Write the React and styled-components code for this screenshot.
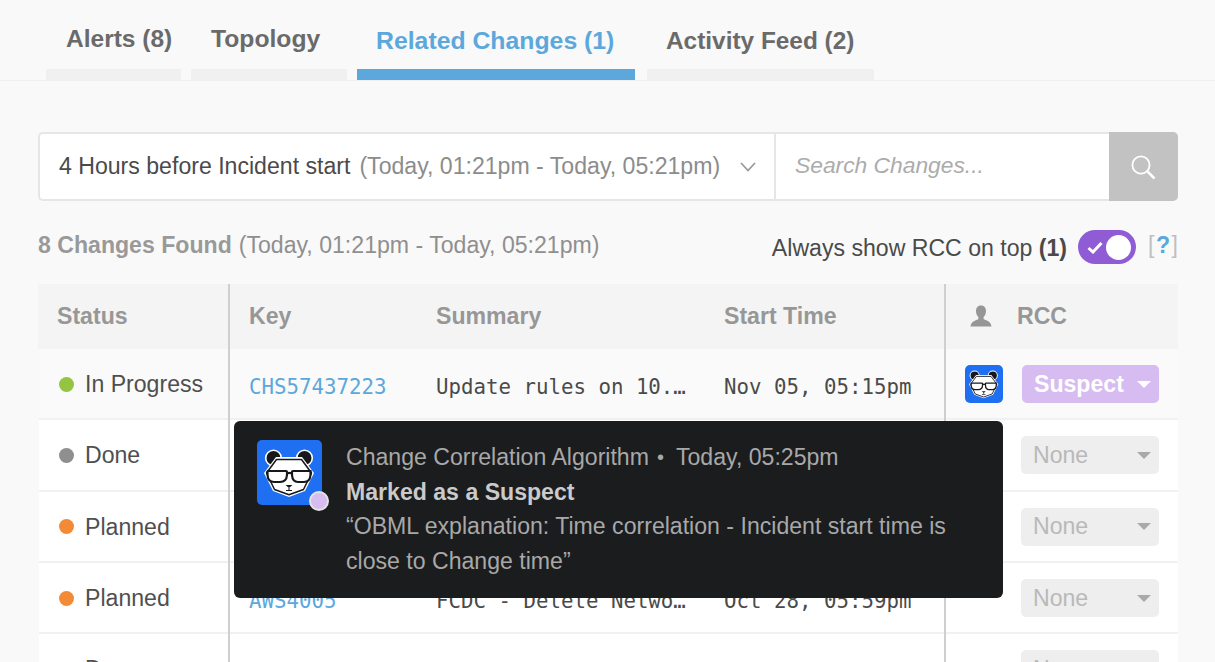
import React from "react";
import styled, { createGlobalStyle } from "styled-components";

const Global = createGlobalStyle`
  html, body { margin: 0; padding: 0; height: 662px; overflow: hidden; background: #f9f9f9; }
  body { font-family: "Liberation Sans", Arial, sans-serif; color: #4a4a4a; }
  * { box-sizing: border-box; }
`;

const Page = styled.div`
  width: 1215px;
  height: 662px;
  overflow: hidden;
  background: #f9f9f9;
`;

const TabBar = styled.nav`
  display: flex;
  height: 81px;
  padding-left: 46px;
  border-bottom: 1px solid #efefef;
`;

const Tab = styled.div`
  width: ${(p) => p.$width}px;
  margin-right: ${(p) => p.$gap}px;
  height: 80px;
  display: flex;
  flex-direction: column;
  justify-content: space-between;
`;

const TabLabel = styled.div`
  padding: ${(p) => p.$top}px 0 0 ${(p) => p.$left}px;
  font-size: ${(p) => p.$size}px;
  line-height: 28px;
  font-weight: 700;
  white-space: nowrap;
  color: ${(p) => (p.$active ? "#5ca8dc" : "#6a6a6a")};
`;

const TabBarMark = styled.div`
  height: 11px;
  background: ${(p) => (p.$active ? "#5ca8dc" : "#f0f0f0")};
`;

const Main = styled.main`
  padding: 51px 37px 0 38px;
`;

const FilterBar = styled.div`
  display: flex;
  height: 69px;
  background: #fff;
  border: 2px solid #e6e6e6;
  border-right: 0;
  border-radius: 5px;
`;

const RangeSelect = styled.div`
  width: 736px;
  display: flex;
  align-items: center;
  padding: 0 18px 0 19px;
  border-right: 2px solid #e6e6e6;
  font-size: 23.1px;
  white-space: nowrap;
`;

const RangeMuted = styled.span`
  margin-left: 9px;
  color: #8c8c8c;
`;

const Chevron = styled.svg`
  margin-left: auto;
  width: 16px;
  height: 10px;
  fill: none;
  stroke: #9a9a9a;
  stroke-width: 1.8;
`;

const SearchInput = styled.div`
  flex: 1;
  padding: 0 0 3px 19px;
  display: flex;
  align-items: center;
  font-size: 22.8px;
  font-style: italic;
  color: #acacac;
`;

const SearchButton = styled.div`
  width: 69px;
  margin: -2px 0;
  padding-right: 2px;
  background: #c2c2c2;
  border-radius: 0 5px 5px 0;
  display: flex;
  align-items: center;
  justify-content: center;
`;

const SummaryRow = styled.div`
  height: 83px;
  padding-top: 30px;
  display: flex;
  justify-content: space-between;
  font-size: 23.1px;
`;

const Found = styled.div`
  color: #8f8f8f;
  line-height: 28px;
  white-space: nowrap;
`;

const FoundBold = styled.b`
  font-weight: 700;
  color: #999;
  margin-right: 7px;
`;

const AlwaysShow = styled.div`
  display: flex;
  align-items: flex-start;
  line-height: 28px;
  padding-top: 3px;
  white-space: nowrap;
  color: #4a4a4a;
`;

const Toggle = styled.div`
  width: 58px;
  height: 34px;
  margin: -4px 0 0 11px;
  padding: 3px 5px 3px 9px;
  border-radius: 17px;
  background: #8f5cd6;
  display: flex;
  align-items: center;
  justify-content: space-between;
`;

const ToggleKnob = styled.div`
  width: 25px;
  height: 25px;
  border-radius: 50%;
  background: #fff;
`;

const Help = styled.div`
  margin-left: 12px;
  margin-top: -3px;
  color: #c0c0c0;
`;

const HelpMark = styled.b`
  color: #5ca8dc;
  margin: 0 1.5px;
`;

const TableWrap = styled.div`
  position: relative;
  width: 1140px;
`;

const HeadRow = styled.div`
  display: grid;
  grid-template-columns: 192px 186px 288px 240px 234px;
  height: 65px;
  background: #f4f4f4;
`;

const BodyRow = styled.div`
  display: grid;
  grid-template-columns: 191px 186px 288px 240px 234px;
  height: 71.33px;
  margin-left: 1px;
  background: linear-gradient(#f1f1f1, #f1f1f1) bottom / 100% 2px no-repeat,
    ${(p) => (p.$tint ? "#fafafa" : "#fff")};
`;

const Cell = styled.div`
  display: flex;
  align-items: center;
  min-width: 0;
  padding: ${(p) => (p.$body ? "1px" : "0")} 0 ${(p) => (p.$body ? "2px" : "0")} ${(p) => p.$pad ?? 20}px;
  white-space: nowrap;
  ${(p) => p.$divider && "border-right: 2px solid #cfcfcf;"}
  ${(p) => p.$dividerLeft && "border-left: 2px solid #cfcfcf;"}
`;

const HeadLabel = styled.span`
  font-size: 23.1px;
  font-weight: 700;
  color: #979797;
`;

const Dot = styled.span`
  width: 15px;
  height: 15px;
  border-radius: 50%;
  margin-right: 11px;
  background: ${(p) => p.$color};
`;

const StatusText = styled.span`
  font-size: 23.1px;
  padding-top: 1px;
  color: #4f4f4f;
`;

const KeyLink = styled.span`
  font-family: "DejaVu Sans Mono", monospace;
  font-size: 20.75px;
  padding-top: 6px;
  color: #5ca8dc;
`;

const Mono = styled.span`
  font-family: "DejaVu Sans Mono", monospace;
  font-size: 20.75px;
  padding-top: 6px;
  color: #4a4a4a;
`;

const Avatar = styled.div`
  width: ${(p) => p.$size}px;
  height: ${(p) => p.$size}px;
  border-radius: ${(p) => p.$radius}px;
  background: #1f6ff2;
  flex: none;
  line-height: 0;
`;

const RccPill = styled.div`
  width: ${(p) => (p.$suspect ? 137 : 138)}px;
  height: 38px;
  margin-left: ${(p) => p.$left}px;
  border-radius: 5px;
  padding: 0 8px 0 12px;
  display: flex;
  align-items: center;
  justify-content: space-between;
  font-size: 23.1px;
  font-weight: ${(p) => (p.$suspect ? 700 : 400)};
  color: ${(p) => (p.$suspect ? "#fff" : "#b9b9b9")};
  background: ${(p) => (p.$suspect ? "#d6bcf0" : "#eeeeee")};
`;

const Caret = styled.i`
  width: 0;
  height: 0;
  border-left: 7px solid transparent;
  border-right: 7px solid transparent;
  border-top: 7px solid ${(p) => (p.$suspect ? "#fff" : "#a9a9a9")};
`;

const PersonIcon = styled.svg`
  width: 22px;
  height: 22px;
  margin: 0 25px 2px 4px;
  fill: #969696;
`;

const Tooltip = styled.div`
  position: absolute;
  left: 196px;
  top: 137px;
  width: 769px;
  height: 177px;
  padding: 19px 24px 0 23px;
  border-radius: 6px;
  background: #1b1c1e;
  display: flex;
  align-items: flex-start;
`;

const TipAvatarWrap = styled.div`
  position: relative;
  margin-right: 24px;
  flex: none;
`;

const TipBadge = styled.span`
  position: absolute;
  right: -7px;
  bottom: -6px;
  width: 20px;
  height: 20px;
  border-radius: 50%;
  background: #d6bcf0;
  border: 2px solid #e4e4e4;
`;

const TipBody = styled.div`
  font-size: 23.1px;
  line-height: 34.7px;
  color: #a8a8a8;
`;

const TipMeta = styled.div`
  display: flex;
  align-items: center;
  height: 34.7px;
  white-space: nowrap;
`;

const TipSeparator = styled.span`
  margin: 0 12px 0 8px;
  font-size: 20px;
  line-height: 20px;
`;

const TipTitle = styled.div`
  font-weight: 700;
  color: #cacaca;
`;

const Panda = () => (
  <svg viewBox="0 0 65 65" width="100%" height="100%">
    <circle cx="16.5" cy="18" r="8.6" fill="#fff" />
    <circle cx="47.5" cy="18" r="8.6" fill="#fff" />
    <circle cx="16.5" cy="18" r="7" fill="#16181c" />
    <circle cx="47.5" cy="18" r="7" fill="#16181c" />
    <path d="M19 17 L45 17 L57 33 L48 51 L32 57 L16 51 L7 33 Z" fill="#fff" strokeLinejoin="round" />
    <path d="M19.5 19.5 L44.5 19.5 L54.5 33 L46.5 49.5 L32 54.8 L17.5 49.5 L9.5 33 Z" fill="#fff" stroke="#16181c" strokeWidth="1.5" strokeLinejoin="round" />
    <path d="M11 31 H29 Q30 31 30 32 V35 Q29.5 42 23 42 H17 Q11 42 10.5 35 V31.5 Z" fill="#fff" stroke="#16181c" strokeWidth="2.2" />
    <path d="M35 32 Q35 31 36 31 H53.5 V35 Q53 42 47 42 H41 Q35.5 42 35 35 Z" fill="#fff" stroke="#16181c" strokeWidth="2.2" />
    <path d="M30 33 H35" stroke="#16181c" strokeWidth="2.2" />
    <path d="M28.5 45 H35.5 L32 48 Z" fill="#16181c" />
    <path d="M32 48 V50 M29 50.5 H35" stroke="#16181c" strokeWidth="1.1" fill="none" />
  </svg>
);

const tabs = [
  { label: "Alerts (8)", width: 135, gap: 10, top: 25, left: 20, size: 24.5 },
  { label: "Topology", width: 156, gap: 10, top: 25, left: 20, size: 24.7 },
  { label: "Related Changes (1)", width: 278, gap: 12, top: 27, left: 19, size: 24.8, active: true },
  { label: "Activity Feed (2)", width: 227, gap: 0, top: 27, left: 19, size: 24.4 },
];

const rows = [
  { status: "In Progress", color: "#95c442", key: "CHS57437223", summary: "Update rules on 10.…", time: "Nov 05, 05:15pm", suspect: true },
  { status: "Done", color: "#8f8f8f", key: "AWS4012", summary: "FCDC - Update Route…", time: "Nov 02, 03:20pm" },
  { status: "Planned", color: "#f38a35", key: "AWS4008", summary: "FCDC - Add Network…", time: "Oct 30, 11:42am" },
  { status: "Planned", color: "#f38a35", key: "AWS4005", summary: "FCDC - Delete Netwo…", time: "Oct 28, 05:59pm" },
  { status: "Done", color: "#8f8f8f", key: "AWS4001", summary: "FCDC - Create Netwo…", time: "Oct 26, 02:10pm" },
];

export default function App() {
  return (
    <Page>
      <Global />
      <TabBar>
        {tabs.map((t) => (
          <Tab key={t.label} $width={t.width} $gap={t.gap}>
            <TabLabel $active={t.active} $top={t.top} $left={t.left} $size={t.size}>{t.label}</TabLabel>
            <TabBarMark $active={t.active} />
          </Tab>
        ))}
      </TabBar>
      <Main>
        <FilterBar>
          <RangeSelect>
            4 Hours before Incident start
            <RangeMuted>(Today, 01:21pm - Today, 05:21pm)</RangeMuted>
            <Chevron viewBox="0 0 16 10"><path d="M1 1 L8 8.5 L15 1" /></Chevron>
          </RangeSelect>
          <SearchInput>Search Changes...</SearchInput>
          <SearchButton>
            <svg width="28" height="28" viewBox="0 0 28 28" fill="none" stroke="#fff">
              <circle cx="12" cy="12" r="8.6" strokeWidth="1.8" />
              <path d="M18.4 18.4 L25.5 25.5" strokeWidth="2.6" />
            </svg>
          </SearchButton>
        </FilterBar>
        <SummaryRow>
          <Found>
            <FoundBold>8 Changes Found</FoundBold>(Today, 01:21pm - Today, 05:21pm)
          </Found>
          <AlwaysShow>
            <span>Always show RCC on top <b>(1)</b></span>
            <Toggle>
              <svg width="16" height="13" viewBox="0 0 16 13" fill="none" stroke="#fff" strokeWidth="3">
                <path d="M1.5 7 L6 11 L14.5 2" />
              </svg>
              <ToggleKnob />
            </Toggle>
            <Help>[<HelpMark>?</HelpMark>]</Help>
          </AlwaysShow>
        </SummaryRow>
        <TableWrap>
          <HeadRow>
            <Cell $divider $pad={19}><HeadLabel>Status</HeadLabel></Cell>
            <Cell $pad={19}><HeadLabel>Key</HeadLabel></Cell>
            <Cell><HeadLabel>Summary</HeadLabel></Cell>
            <Cell><HeadLabel>Start Time</HeadLabel></Cell>
            <Cell $dividerLeft>
              <PersonIcon viewBox="0 0 22 22">
                <path d="M11 0.5 C14.5 0.5 16 3 16 6 C16 9 14.8 11 13.6 12 V14 C15.5 15.5 21 16 21.5 21.5 H0.5 C1 16 6.5 15.5 8.4 14 V12 C7.2 11 6 9 6 6 C6 3 7.5 0.5 11 0.5 Z" />
              </PersonIcon>
              <HeadLabel>RCC</HeadLabel>
            </Cell>
          </HeadRow>
          {rows.map((r, i) => (
            <BodyRow key={r.key} $tint={i === 0}>
              <Cell $body $divider><Dot $color={r.color} /><StatusText>{r.status}</StatusText></Cell>
              <Cell $body $pad={19}><KeyLink>{r.key}</KeyLink></Cell>
              <Cell $body><Mono>{r.summary}</Mono></Cell>
              <Cell $body><Mono>{r.time}</Mono></Cell>
              <Cell $body $dividerLeft $pad={19}>
                {r.suspect && <Avatar $size={38} $radius={5}><Panda /></Avatar>}
                <RccPill $suspect={r.suspect} $left={r.suspect ? 19 : 56}>
                  {r.suspect ? "Suspect" : "None"}
                  <Caret $suspect={r.suspect} />
                </RccPill>
              </Cell>
            </BodyRow>
          ))}
          <Tooltip>
            <TipAvatarWrap>
              <Avatar $size={65} $radius={5}><Panda /></Avatar>
              <TipBadge />
            </TipAvatarWrap>
            <TipBody>
              <TipMeta>
                Change Correlation Algorithm<TipSeparator>•</TipSeparator>Today, 05:25pm
              </TipMeta>
              <TipTitle>Marked as a Suspect</TipTitle>
              <div>“OBML explanation: Time correlation - Incident start time is close to Change time”</div>
            </TipBody>
          </Tooltip>
        </TableWrap>
      </Main>
    </Page>
  );
}
